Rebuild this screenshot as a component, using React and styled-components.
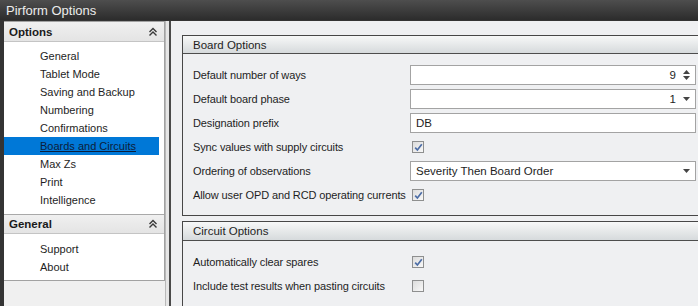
import React from "react";
import styled, { createGlobalStyle } from "styled-components";

const Global = createGlobalStyle`
  html, body {
    margin: 0;
    padding: 0;
    background: #2e2e2e;
  }
  * { box-sizing: border-box; }
`;

const Window = styled.div`
  width: 698px;
  height: 306px;
  display: flex;
  flex-direction: column;
  background: #343434;
  overflow: hidden;
  font-family: "Liberation Sans", Arial, sans-serif;
  font-size: 11px;
  color: #1e1e1e;
`;

const TitleBar = styled.div`
  height: 20px;
  flex: none;
  display: flex;
  align-items: center;
  padding-left: 6px;
  background: linear-gradient(#4e4e4e, #2c2c2c);
  color: #ececec;
  font-size: 13px;
`;

const Content = styled.div`
  flex: 1;
  display: flex;
  margin-top: 1px;
  margin-left: 4px;
  background: #f0f0f0;
  min-height: 0;
`;

const Sidebar = styled.div`
  width: 161px;
  flex: none;
  display: flex;
  flex-direction: column;
  background: #f0f0f0;
`;

const NavBox = styled.div`
  background: #fff;
  border: 1px solid #a2a2a2;
  border-left: none;
`;

const SectionHeader = styled.div`
  height: 20px;
  display: flex;
  align-items: center;
  justify-content: space-between;
  padding: 0 6px 0 5px;
  background: linear-gradient(#f0f0f0, #e4e4e4);
  border-bottom: 1px solid #c4c4c4;
  border-top: ${(p) => (p.$first ? "none" : "1px solid #a9a9a9")};
  font-weight: bold;
  font-size: 11.5px;
  color: #1a1a1a;
`;

const ItemList = styled.div`
  display: flex;
  flex-direction: column;
  padding: ${(p) => p.$pad || "5px 5px 5px 0"};
`;

const NavItem = styled.div`
  height: 18px;
  display: flex;
  align-items: center;
  padding-left: 36px;
  background: ${(p) => (p.$active ? "#0078d7" : "transparent")};
  color: ${(p) => (p.$active ? "#0c1d3a" : "#1e1e1e")};
  text-decoration: ${(p) => (p.$active ? "underline" : "none")};
`;

const Splitter = styled.div`
  width: 6px;
  flex: none;
  background: #e6e6e6;
  border-left: 1px solid #b9b9b9;
  border-right: 2px solid #4a4a4a;
`;

const Main = styled.div`
  flex: 1;
  min-width: 0;
  display: flex;
  flex-direction: column;
  gap: 5px;
  padding: 14px 0 0 11px;
  background: #eff0f2;
  overflow: hidden;
`;

const Group = styled.div`
  margin-right: -8px;
  border: 1px solid #474747;
  border-width: 1px 1px 1px 1.5px;
  background: #eff0f2;
  flex: none;
`;

const GroupHeader = styled.div`
  height: ${(p) => p.$h || 18}px;
  display: flex;
  align-items: center;
  padding-left: 10px;
  font-size: 11.5px;
  background: linear-gradient(#f7f8f8, #d6dadc);
  border-bottom: 1px solid #4d4d4d;
  color: #1e1e1e;
`;

const GroupBody = styled.div`
  display: grid;
  grid-template-columns: 217px 1fr;
  grid-auto-rows: 20px;
  row-gap: 4px;
  align-items: center;
  padding: ${(p) => p.$pad || "11px 9px 10px 10px"};
`;

const Label = styled.div`
  white-space: nowrap;
  letter-spacing: -0.12px;
`;

const Field = styled.div`
  height: 20px;
  display: flex;
  align-items: center;
  justify-content: ${(p) => (p.$right ? "flex-end" : "space-between")};
  gap: 6px;
  padding: 0 4px 0 5px;
  background: #fff;
  border: 1px solid #a3a3a3;
  font-size: 11.5px;
`;

const Arrows = styled.div`
  display: flex;
  flex-direction: column;
  align-items: center;
  gap: 2px;
  width: 9px;
`;

const Box = styled.div`
  width: 12px;
  height: 12px;
  margin-left: 2px;
  border: 1px solid #8e8f8f;
  background: linear-gradient(135deg, #dcdcdc, #f8f8f8);
  display: flex;
  align-items: center;
  justify-content: center;
`;

const Chevrons = () => (
  <svg width="10" height="10" viewBox="0 0 10 10">
    <path d="M1.5 5 L5 1.5 L8.5 5 M1.5 8.5 L5 5 L8.5 8.5" fill="none" stroke="#3a3a3a" strokeWidth="1.4" />
  </svg>
);

const Tri = ({ up }) => (
  <svg width="7" height="4" viewBox="0 0 7 4">
    <path d={up ? "M0 4 L3.5 0 L7 4 Z" : "M0 0 L7 0 L3.5 4 Z"} fill="#444" />
  </svg>
);

const Check = ({ on }) => (
  <Box>
    {on && (
      <svg width="9" height="9" viewBox="0 0 9 9">
        <path d="M1.2 4.6 L3.4 7 L7.8 1.3" fill="none" stroke="#4c6da6" strokeWidth="1.7" />
      </svg>
    )}
  </Box>
);

const optionItems = ["General", "Tablet Mode", "Saving and Backup", "Numbering", "Confirmations", "Boards and Circuits", "Max Zs", "Print", "Intelligence"];
const generalItems = ["Support", "About"];

export default function App() {
  return (
    <Window>
      <Global />
      <TitleBar>Pirform Options</TitleBar>
      <Content>
        <Sidebar>
          <NavBox>
            <SectionHeader $first>
              Options
              <Chevrons />
            </SectionHeader>
            <ItemList>
              {optionItems.map((it) => (
                <NavItem key={it} $active={it === "Boards and Circuits"}>{it}</NavItem>
              ))}
            </ItemList>
            <SectionHeader>
              General
              <Chevrons />
            </SectionHeader>
            <ItemList $pad="6px 5px 4px 0">
              {generalItems.map((it) => (
                <NavItem key={it}>{it}</NavItem>
              ))}
            </ItemList>
          </NavBox>
        </Sidebar>
        <Splitter />
        <Main>
          <Group>
            <GroupHeader>Board Options</GroupHeader>
            <GroupBody>
              <Label>Default number of ways</Label>
              <Field $right>
                9
                <Arrows>
                  <Tri up />
                  <Tri />
                </Arrows>
              </Field>
              <Label>Default board phase</Label>
              <Field $right>
                1
                <Arrows>
                  <Tri />
                </Arrows>
              </Field>
              <Label>Designation prefix</Label>
              <Field>DB</Field>
              <Label>Sync values with supply circuits</Label>
              <Check on />
              <Label>Ordering of observations</Label>
              <Field>
                Severity Then Board Order
                <Arrows>
                  <Tri />
                </Arrows>
              </Field>
              <Label>Allow user OPD and RCD operating currents</Label>
              <Check on />
            </GroupBody>
          </Group>
          <Group>
            <GroupHeader $h={19}>Circuit Options</GroupHeader>
            <GroupBody $pad="11px 9px 12px 10px">
              <Label>Automatically clear spares</Label>
              <Check on />
              <Label>Include test results when pasting circuits</Label>
              <Check />
            </GroupBody>
          </Group>
        </Main>
      </Content>
    </Window>
  );
}
